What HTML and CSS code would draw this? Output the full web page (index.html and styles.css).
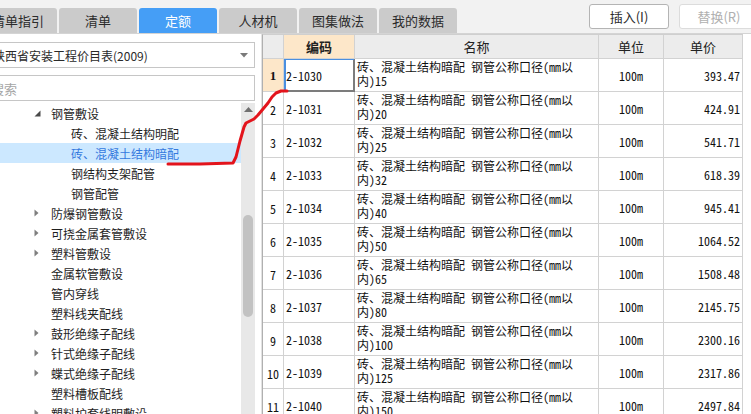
FILE: index.html
```html
<!DOCTYPE html>
<html lang="zh-CN">
<head>
<meta charset="utf-8">
<title>定额</title>
<link rel="stylesheet" href="styles.css">
</head>
<body>
<div class="app">
  <header class="topbar">
    <nav class="tabs">
      <div class="tab">清单指引</div>
      <div class="tab">清单</div>
      <div class="tab active">定额</div>
      <div class="tab">人材机</div>
      <div class="tab">图集做法</div>
      <div class="tab">我的数据</div>
    </nav>
    <div class="actions">
      <button class="btn">插入(I)</button>
      <button class="btn disabled">替换(R)</button>
    </div>
  </header>
  <main class="main">
    <aside class="left">
      <div class="select">
        <span class="select-text">陕西省安装工程价目表(2009)</span>
        <svg class="caret" width="8" height="5" viewBox="0 0 8 5"><polygon points="0,0 8,0 4,4.5" fill="#7a7a7a"/></svg>
      </div>
      <div class="search">搜索</div>
      <div class="treewrap">
        <ul class="tree">
          <li class="node l1"><span class="tog"><svg width="7" height="7" viewBox="0 0 7 7"><polygon points="6.5,0.5 6.5,6.5 0.5,6.5" fill="#4a4a4a"/></svg></span>钢管敷设</li>
          <li class="node l2">砖、混凝土结构明配</li>
          <li class="node l2 sel">砖、混凝土结构暗配</li>
          <li class="node l2">钢结构支架配管</li>
          <li class="node l2">钢管配管</li>
          <li class="node l1"><span class="tog"><svg width="5" height="8" viewBox="0 0 5 8"><polygon points="0.5,0.5 4.5,4 0.5,7.5" fill="#7f7f7f"/></svg></span>防爆钢管敷设</li>
          <li class="node l1"><span class="tog"><svg width="5" height="8" viewBox="0 0 5 8"><polygon points="0.5,0.5 4.5,4 0.5,7.5" fill="#7f7f7f"/></svg></span>可挠金属套管敷设</li>
          <li class="node l1"><span class="tog"><svg width="5" height="8" viewBox="0 0 5 8"><polygon points="0.5,0.5 4.5,4 0.5,7.5" fill="#7f7f7f"/></svg></span>塑料管敷设</li>
          <li class="node l1"><span class="tog"></span>金属软管敷设</li>
          <li class="node l1"><span class="tog"></span>管内穿线</li>
          <li class="node l1"><span class="tog"></span>塑料线夹配线</li>
          <li class="node l1"><span class="tog"><svg width="5" height="8" viewBox="0 0 5 8"><polygon points="0.5,0.5 4.5,4 0.5,7.5" fill="#7f7f7f"/></svg></span>鼓形绝缘子配线</li>
          <li class="node l1"><span class="tog"><svg width="5" height="8" viewBox="0 0 5 8"><polygon points="0.5,0.5 4.5,4 0.5,7.5" fill="#7f7f7f"/></svg></span>针式绝缘子配线</li>
          <li class="node l1"><span class="tog"><svg width="5" height="8" viewBox="0 0 5 8"><polygon points="0.5,0.5 4.5,4 0.5,7.5" fill="#7f7f7f"/></svg></span>蝶式绝缘子配线</li>
          <li class="node l1"><span class="tog"></span>塑料槽板配线</li>
          <li class="node l1"><span class="tog"><svg width="5" height="8" viewBox="0 0 5 8"><polygon points="0.5,0.5 4.5,4 0.5,7.5" fill="#7f7f7f"/></svg></span>塑料护套线明敷设</li>
        </ul>
        <div class="vscroll">
          <svg class="up" width="9" height="5" viewBox="0 0 9 5"><polygon points="0,5 9,5 4.5,0" fill="#707070"/></svg>
          <div class="thumb"></div>
        </div>
      </div>
    </aside>
    <section class="grid">
      <div class="row head">
        <div class="c rn"></div>
        <div class="c hc code-h">编码</div>
        <div class="c hc">名称</div>
        <div class="c hc">单位</div>
        <div class="c hc">单价</div>
      </div>
      <div class="row">
        <div class="c rn cur">1</div>
        <div class="c code focus">2-1030</div>
        <div class="c name">砖、混凝土结构暗配 钢管公称口径(mm以<br>内)15</div>
        <div class="c unit">100m</div>
        <div class="c price">393.47</div>
      </div>
      <div class="row">
        <div class="c rn">2</div>
        <div class="c code">2-1031</div>
        <div class="c name">砖、混凝土结构暗配 钢管公称口径(mm以<br>内)20</div>
        <div class="c unit">100m</div>
        <div class="c price">424.91</div>
      </div>
      <div class="row">
        <div class="c rn">3</div>
        <div class="c code">2-1032</div>
        <div class="c name">砖、混凝土结构暗配 钢管公称口径(mm以<br>内)25</div>
        <div class="c unit">100m</div>
        <div class="c price">541.71</div>
      </div>
      <div class="row">
        <div class="c rn">4</div>
        <div class="c code">2-1033</div>
        <div class="c name">砖、混凝土结构暗配 钢管公称口径(mm以<br>内)32</div>
        <div class="c unit">100m</div>
        <div class="c price">618.39</div>
      </div>
      <div class="row">
        <div class="c rn">5</div>
        <div class="c code">2-1034</div>
        <div class="c name">砖、混凝土结构暗配 钢管公称口径(mm以<br>内)40</div>
        <div class="c unit">100m</div>
        <div class="c price">945.41</div>
      </div>
      <div class="row">
        <div class="c rn">6</div>
        <div class="c code">2-1035</div>
        <div class="c name">砖、混凝土结构暗配 钢管公称口径(mm以<br>内)50</div>
        <div class="c unit">100m</div>
        <div class="c price">1064.52</div>
      </div>
      <div class="row">
        <div class="c rn">7</div>
        <div class="c code">2-1036</div>
        <div class="c name">砖、混凝土结构暗配 钢管公称口径(mm以<br>内)65</div>
        <div class="c unit">100m</div>
        <div class="c price">1508.48</div>
      </div>
      <div class="row">
        <div class="c rn">8</div>
        <div class="c code">2-1037</div>
        <div class="c name">砖、混凝土结构暗配 钢管公称口径(mm以<br>内)80</div>
        <div class="c unit">100m</div>
        <div class="c price">2145.75</div>
      </div>
      <div class="row">
        <div class="c rn">9</div>
        <div class="c code">2-1038</div>
        <div class="c name">砖、混凝土结构暗配 钢管公称口径(mm以<br>内)100</div>
        <div class="c unit">100m</div>
        <div class="c price">2300.16</div>
      </div>
      <div class="row">
        <div class="c rn">10</div>
        <div class="c code">2-1039</div>
        <div class="c name">砖、混凝土结构暗配 钢管公称口径(mm以<br>内)125</div>
        <div class="c unit">100m</div>
        <div class="c price">2317.86</div>
      </div>
      <div class="row">
        <div class="c rn">11</div>
        <div class="c code">2-1040</div>
        <div class="c name">砖、混凝土结构暗配 钢管公称口径(mm以<br>内)150</div>
        <div class="c unit">100m</div>
        <div class="c price">2497.84</div>
      </div>
    </section>
  </main>
  <svg class="annot" width="751" height="414" viewBox="0 0 751 414">
    <polyline points="168,164 200,164 233,163 236,157 238,149 240,141 242,134 244,127 246,123 250,121 254,119 258,115 263,109 268,103 272,97 276,93 281,91 287,91" fill="none" stroke="#e3141c" stroke-width="3" stroke-linejoin="round" stroke-linecap="round"/>
  </svg>
</div>
</body>
</html>
```

FILE: styles.css
```css
* { box-sizing: border-box; }
html, body {
  margin: 0;
  padding: 0;
  width: 751px;
  height: 414px;
  overflow: hidden;
  background: #ffffff;
}
body {
  font-family: "Noto Sans CJK SC", "Microsoft YaHei", sans-serif;
  font-size: 12px;
  color: #222;
}
.app {
  position: relative;
  width: 751px;
  height: 414px;
  overflow: hidden;
  display: flex;
  flex-direction: column;
}

/* top bar */
.topbar {
  height: 34px;
  flex: none;
  display: flex;
  align-items: flex-start;
  background: #f2f2f2;
  border-bottom: 1px solid #d4d4d4;
}
.tabs {
  display: flex;
  gap: 2px;
  margin-left: -21px;
  padding-top: 8px;
}
.tab {
  width: 78px;
  height: 25px;
  background: #cbcbcb;
  border-radius: 3px 3px 0 0;
  display: flex;
  align-items: center;
  justify-content: center;
  font-size: 13px;
  color: #2b2b2b;
}
.tab.active {
  background: #459ef6;
  color: #ffffff;
}
.actions {
  display: flex;
  gap: 10px;
  margin-left: 132px;
  padding-top: 4px;
}
.btn {
  width: 80px;
  height: 25px;
  flex: none;
  background: #ffffff;
  border: 1px solid #b4b4b4;
  border-radius: 3px;
  font-family: "Noto Sans CJK SC", sans-serif;
  font-size: 13px;
  color: #2b2b2b;
  padding: 0;
}
.btn.disabled {
  border-color: #dcdcdc;
  color: #b0b0b0;
}

/* main */
.main {
  flex: 1;
  display: flex;
  min-height: 0;
}
.left {
  width: 262px;
  flex: none;
  border-right: 1px solid #e2e2e2;
  display: flex;
  flex-direction: column;
  padding-top: 8px;
  overflow: hidden;
}
.select {
  height: 26px;
  margin-left: -14px;
  margin-right: 6px;
  border: 1px solid #c6c6c6;
  background: #fff;
  display: flex;
  align-items: center;
  padding-left: 6px;
  padding-right: 6px;
  font-size: 12px;
  color: #2a2a2a;
}
.select-text { flex: 1; white-space: nowrap; }
.caret { flex: none; }
.search {
  height: 26px;
  margin-top: 7px;
  margin-left: -15px;
  margin-right: 6px;
  border: 1px solid #c6c6c6;
  background: #fff;
  display: flex;
  align-items: center;
  padding-left: 5px;
  font-size: 13px;
  color: #a5a5a5;
}
.treewrap {
  flex: 1;
  display: flex;
  margin-top: 2px;
  margin-right: 6px;
  min-height: 0;
}
.tree {
  list-style: none;
  margin: 0;
  padding: 0;
  flex: 1;
}
.node {
  height: 20px;
  display: flex;
  align-items: center;
  white-space: nowrap;
  font-size: 12px;
  color: #1e1e1e;
}
.node.l1 { padding-left: 34px; }
.node.l2 { padding-left: 71px; }
.tog {
  width: 17px;
  flex: none;
  display: flex;
  align-items: center;
}
.node.sel {
  background: #cce8ff;
  color: #3479de;
}
.vscroll {
  width: 14px;
  flex: none;
  background: #e8e8e8;
  display: flex;
  flex-direction: column;
  align-items: center;
  padding-top: 4px;
}
.up { flex: none; }
.thumb {
  margin-top: 103px;
  width: 10px;
  height: 102px;
  border-radius: 5px;
  background: #c2c2c2;
}

/* grid */
.grid {
  flex: none;
  width: 481px;
  border-left: 1px solid #b0b0b0;
  border-top: 1px solid #cfcfcf;
  align-self: flex-start;
}
.row {
  display: grid;
  grid-template-columns: 21px 71px 244px 65px 79px;
  height: 33px;
}
.row.head { height: 24px; }
.c {
  border-right: 1px solid #d2d2d2;
  border-bottom: 1px solid #d2d2d2;
  font-family: "Noto Sans Mono CJK SC", "Liberation Mono", "Noto Sans CJK SC", monospace;
  font-size: 12px;
  color: #111;
  white-space: nowrap;
  overflow: hidden;
}
.head .c {
  background: #ececec;
  font-family: "Noto Sans CJK SC", sans-serif;
  font-size: 13px;
  color: #222;
  display: flex;
  align-items: center;
  justify-content: center;
}
.head .code-h {
  background: #fde7c9;
  font-weight: bold;
}
.rn {
  display: flex;
  align-items: center;
  justify-content: center;
  padding-top: 2px;
}
.rn.cur {
  background: #fde7c9;
  font-family: "Liberation Serif", serif;
  font-weight: bold;
  font-size: 13px;
}
.code {
  display: flex;
  align-items: center;
  padding-left: 2px;
}
.code.focus {
  box-shadow: inset 2px 1px 0 #4a8fe0, inset -1px -1px 0 #7c7c7c;
  border-right-color: #7c7c7c;
  border-bottom-color: #7c7c7c;
}
.name {
  padding: 1px 2px 0;
  line-height: 14px;
}
.unit {
  display: flex;
  align-items: center;
  justify-content: center;
}
.price {
  display: flex;
  align-items: center;
  justify-content: flex-end;
  padding-right: 2px;
}

.annot {
  position: absolute;
  left: 0;
  top: 0;
  pointer-events: none;
}
```
